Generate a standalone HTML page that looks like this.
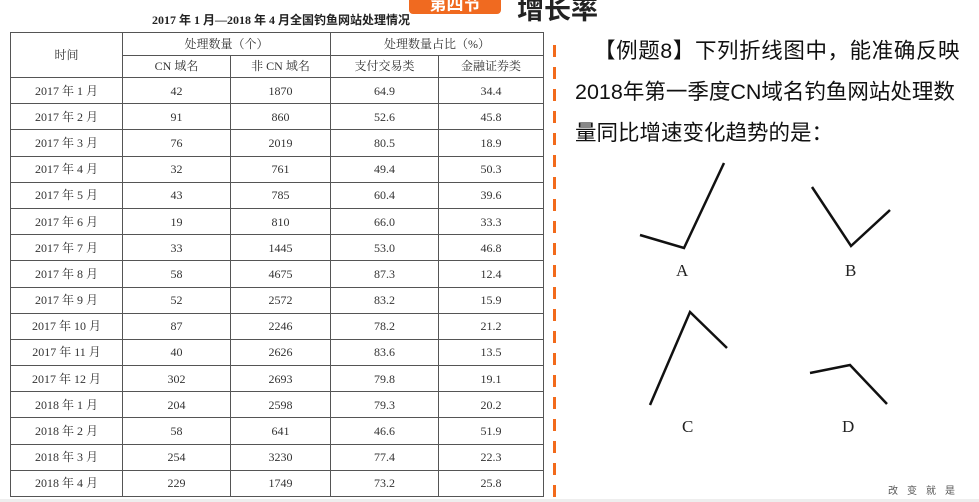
<!DOCTYPE html>
<html><head><meta charset="utf-8"><style>
*{margin:0;padding:0}
body{width:979px;height:502px;background:#fff;position:relative;overflow:hidden;font-family:"Liberation Serif","Noto Serif CJK SC",serif;color:#222}
.t{position:absolute;white-space:nowrap}
table{position:absolute;left:10px;top:32px;border-collapse:collapse;font-size:12px;color:#333;table-layout:fixed}
td{border:1px solid #555;text-align:center;height:25.2px;padding:0;line-height:12px;overflow:hidden}
tr.h td{height:21.5px}
.rt{font-family:"Liberation Sans","Noto Sans CJK SC",sans-serif;font-size:21.5px;color:#111;position:absolute;white-space:nowrap}
.dash{position:absolute;left:553px;top:45px;width:3px;height:457px;background:repeating-linear-gradient(#f26a1b 0 12px,transparent 12px 22px)}
.lab{position:absolute;font-family:"Liberation Serif",serif;font-size:17px;color:#222}
</style></head><body>
<div style="position:absolute;left:409px;top:-10px;width:92px;height:24px;background:#f06a20;border-radius:4px;color:#fff;font-family:'Noto Sans CJK SC',sans-serif;font-weight:bold;font-size:17px;text-align:center;line-height:26px">第四节</div>
<div class="t" style="left:517px;top:-12px;font-family:'Noto Sans CJK SC',sans-serif;font-weight:bold;font-size:27px;color:#222">增长率</div>
<div class="t" style="left:152px;top:11px;font-size:12px;font-weight:bold;font-family:'Liberation Serif','Noto Sans CJK SC',serif">2017 年 1 月—2018 年 4 月全国钓鱼网站处理情况</div>
<table>
<colgroup><col style="width:112px"><col style="width:108px"><col style="width:100px"><col style="width:108px"><col style="width:105px"></colgroup>
<tr class="h"><td rowspan="2">时间</td><td colspan="2">处理数量（个）</td><td colspan="2">处理数量占比（%）</td></tr>
<tr class="h"><td>CN 域名</td><td>非 CN 域名</td><td>支付交易类</td><td>金融证券类</td></tr>
<tr><td>2017 年 1 月</td><td>42</td><td>1870</td><td>64.9</td><td>34.4</td></tr>
<tr><td>2017 年 2 月</td><td>91</td><td>860</td><td>52.6</td><td>45.8</td></tr>
<tr><td>2017 年 3 月</td><td>76</td><td>2019</td><td>80.5</td><td>18.9</td></tr>
<tr><td>2017 年 4 月</td><td>32</td><td>761</td><td>49.4</td><td>50.3</td></tr>
<tr><td>2017 年 5 月</td><td>43</td><td>785</td><td>60.4</td><td>39.6</td></tr>
<tr><td>2017 年 6 月</td><td>19</td><td>810</td><td>66.0</td><td>33.3</td></tr>
<tr><td>2017 年 7 月</td><td>33</td><td>1445</td><td>53.0</td><td>46.8</td></tr>
<tr><td>2017 年 8 月</td><td>58</td><td>4675</td><td>87.3</td><td>12.4</td></tr>
<tr><td>2017 年 9 月</td><td>52</td><td>2572</td><td>83.2</td><td>15.9</td></tr>
<tr><td>2017 年 10 月</td><td>87</td><td>2246</td><td>78.2</td><td>21.2</td></tr>
<tr><td>2017 年 11 月</td><td>40</td><td>2626</td><td>83.6</td><td>13.5</td></tr>
<tr><td>2017 年 12 月</td><td>302</td><td>2693</td><td>79.8</td><td>19.1</td></tr>
<tr><td>2018 年 1 月</td><td>204</td><td>2598</td><td>79.3</td><td>20.2</td></tr>
<tr><td>2018 年 2 月</td><td>58</td><td>641</td><td>46.6</td><td>51.9</td></tr>
<tr><td>2018 年 3 月</td><td>254</td><td>3230</td><td>77.4</td><td>22.3</td></tr>
<tr><td>2018 年 4 月</td><td>229</td><td>1749</td><td>73.2</td><td>25.8</td></tr>
</table>
<div class="dash"></div>
<div class="rt" style="left:594px;top:34px;letter-spacing:0.6px">【例题8】下列折线图中，能准确反映</div>
<div class="rt" style="left:575px;top:75px">2018年第一季度CN域名钓鱼网站处理数</div>
<div class="rt" style="left:575px;top:116px">量同比增速变化趋势的是：</div>
<svg style="position:absolute;left:0;top:0" width="979" height="502" fill="none" stroke="#111" stroke-width="2.5">
<polyline points="640,235 684,248 724,163"/>
<polyline points="812,187 851,246 890,210"/>
<polyline points="650,405 690,312 727,348"/>
<polyline points="810,373 850,365 887,404"/>
</svg>
<div class="lab" style="left:676px;top:261px">A</div>
<div class="lab" style="left:845px;top:261px">B</div>
<div class="lab" style="left:682px;top:417px">C</div>
<div class="lab" style="left:842px;top:417px">D</div>
<div class="t" style="left:888px;top:482px;font-size:10px;color:#555;letter-spacing:9px;font-family:'Noto Sans CJK SC',sans-serif">改变就是</div>
<div style="position:absolute;left:0;top:499px;width:979px;height:3px;background:#eee"></div>
</body></html>
